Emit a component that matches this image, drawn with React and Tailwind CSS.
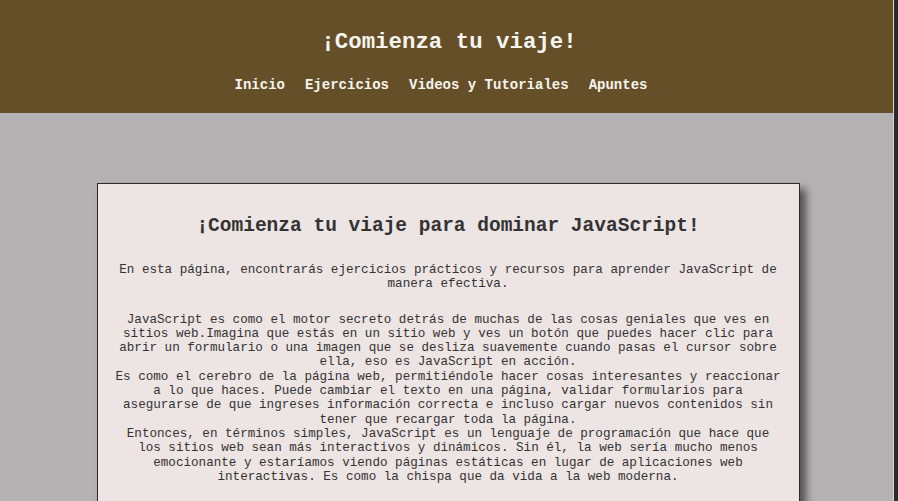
export default function App() {
  const mono = { fontFamily: '"Liberation Mono", "Courier New", monospace' };
  return (
    <div className="min-h-screen bg-[#b4b2b2]" style={mono}>
      {/* Header */}
      <header className="h-[113px] bg-[#654f28] text-[#f7f4ee] flex flex-col items-center">
        <h1 className="mt-[29px] text-[22.4px] leading-[26px] font-bold">¡Comienza tu viaje!</h1>
        <nav className="mt-[22px] flex pr-[16px] text-[14px] leading-[16px] font-bold">
          <a className="mr-[20px]">Inicio</a>
          <a className="mr-[20px]">Ejercicios</a>
          <a className="mr-[20px]">Videos y Tutoriales</a>
          <a>Apuntes</a>
        </nav>
      </header>

      {/* Main */}
      <main className="pt-[70px] flex justify-center pr-[2px]">
        <section className="w-[703px] bg-[#ede4e4] border border-[#2b2b2b] shadow-[6px_6px_8px_rgba(0,0,0,0.55)] px-[15px] pt-[30px] pb-[40px] text-center text-[#333]">
          <h2 className="text-[19.5px] leading-[24px] font-bold">¡Comienza tu viaje para dominar JavaScript!</h2>
          <p className="mt-[25px] text-[12.6px] leading-[14.3px]">
            En esta página, encontrarás ejercicios prácticos y recursos para aprender JavaScript de manera efectiva.
          </p>
          <p className="mt-[21px] text-[12.6px] leading-[14.3px]">
            JavaScript es como el motor secreto detrás de muchas de las cosas geniales que ves en sitios web.Imagina que estás en un sitio web y ves un botón que puedes hacer clic para abrir un formulario o una imagen que se desliza suavemente cuando pasas el cursor sobre ella, eso es JavaScript en acción.
            <br />
            Es como el cerebro de la página web, permitiéndole hacer cosas interesantes y reaccionar a lo que haces. Puede cambiar el texto en una página, validar formularios para asegurarse de que ingreses información correcta e incluso cargar nuevos contenidos sin tener que recargar toda la página.
            <br />
            Entonces, en términos simples, JavaScript es un lenguaje de programación que hace que los sitios web sean más interactivos y dinámicos. Sin él, la web sería mucho menos emocionante y estaríamos viendo páginas estáticas en lugar de aplicaciones web interactivas. Es como la chispa que da vida a la web moderna.
          </p>
        </section>
      </main>

      {/* window edge */}
      <div className="fixed top-0 right-0 h-screen w-[5px] bg-[#2c2a30] border-l border-[#d8d6d6]" />
    </div>
  );
}
